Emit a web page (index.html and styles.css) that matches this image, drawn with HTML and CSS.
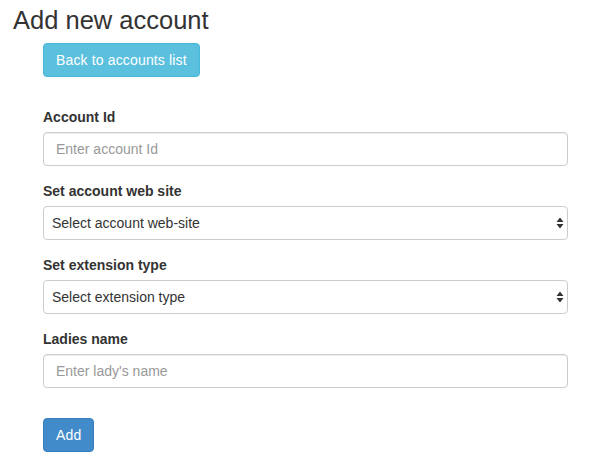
FILE: index.html
```html
<!DOCTYPE html>
<html>
<head>
<meta charset="utf-8">
<link rel="stylesheet" href="styles.css">
</head>
<body>
<h3 class="title">Add new account</h3>
<div class="content">
  <button class="btn btn-info">Back to accounts list</button>
  <form class="form">
    <div class="form-group">
      <label class="label">Account Id</label>
      <input class="control" type="text" placeholder="Enter account Id">
    </div>
    <div class="form-group">
      <label class="label">Set account web site</label>
      <div class="select-wrap">
        <div class="control select">Select account web-site</div>
        <svg class="arrows" width="8" height="12" viewBox="0 0 8 12"><path d="M4 0.5 L7.5 5 H0.5 Z M4 11.5 L7.5 7 H0.5 Z" fill="#333"/></svg>
      </div>
    </div>
    <div class="form-group">
      <label class="label">Set extension type</label>
      <div class="select-wrap">
        <div class="control select">Select extension type</div>
        <svg class="arrows" width="8" height="12" viewBox="0 0 8 12"><path d="M4 0.5 L7.5 5 H0.5 Z M4 11.5 L7.5 7 H0.5 Z" fill="#333"/></svg>
      </div>
    </div>
    <div class="form-group">
      <label class="label">Ladies name</label>
      <input class="control" type="text" placeholder="Enter lady's name">
    </div>
    <button type="button" class="btn btn-primary">Add</button>
  </form>
</div>
</body>
</html>
```
FILE: styles.css
```css
html, body {
  margin: 0;
  padding: 0;
  background: #fff;
  font-family: "Liberation Sans", Arial, sans-serif;
  font-size: 14px;
  line-height: 1.428571;
  color: #333;
}
.title {
  margin: 6px 0 0 13px;
  font-size: 25.5px;
  font-weight: 500;
  line-height: 1.1;
  color: #333;
}
.content {
  margin: 9px 37px 0 43px;
}
.btn {
  display: inline-block;
  box-sizing: border-box;
  height: 34px;
  padding: 6px 12px;
  font-family: inherit;
  font-size: 14px;
  line-height: 20px;
  letter-spacing: 0.15px;
  border: 1px solid transparent;
  border-radius: 4px;
  color: #fff;
  cursor: pointer;
}
.btn-info {
  background: #5bc0de;
  border-color: #46b8da;
}
.btn-primary {
  background: #428bca;
  border-color: #357ebd;
}
.form {
  margin-top: 30px;
}
.form-group {
  margin-bottom: 15px;
}
.label {
  display: block;
  margin-bottom: 5px;
  font-weight: bold;
  line-height: 20px;
}
.control {
  display: block;
  box-sizing: border-box;
  width: 100%;
  height: 34px;
  padding: 6px 12px;
  font-family: inherit;
  font-size: 14px;
  line-height: 20px;
  color: #555;
  background: #fff;
  border: 1px solid #ccc;
  border-radius: 4px;
  box-shadow: inset 0 1px 1px rgba(0,0,0,0.075);
}
.control::placeholder {
  color: #999;
}
.select-wrap {
  position: relative;
}
.select {
  padding-left: 8px;
  color: #333;
  box-shadow: none;
}
.arrows {
  position: absolute;
  right: 4px;
  top: 11px;
}
.form .btn-primary {
  margin-top: 15px;
}
```
